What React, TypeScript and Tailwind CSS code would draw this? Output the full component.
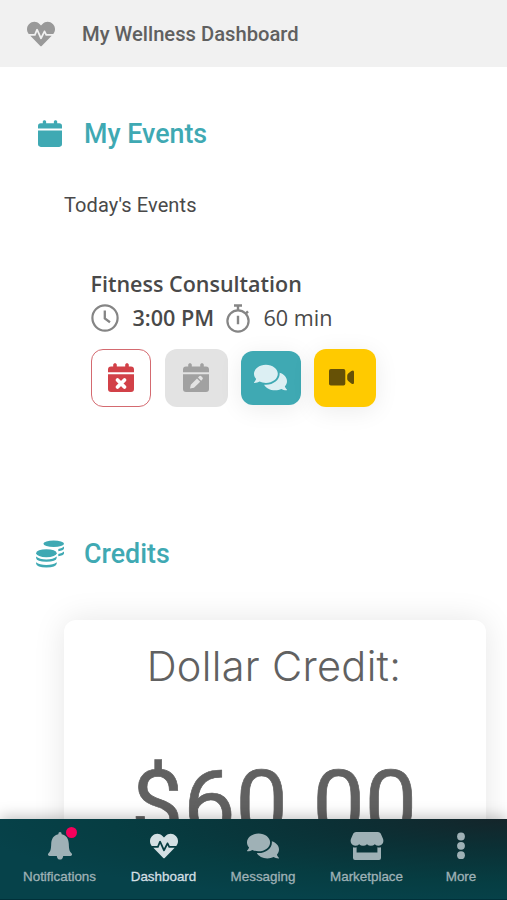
import React from 'react';
import { FaComments, FaHeartbeat } from 'react-icons/fa';

function CalendarIcon({ className, children }: { className?: string; children?: React.ReactNode }) {
  return (
    <svg viewBox="0 0 26 29" fill="currentColor" className={className}>
      <path d="M5.200 1.800C5.200-.4 8.800-.4 8.800 1.800V3.500h8.400V1.800C17.200-.4 20.800-.4 20.800 1.800V3.500H23Q26 3.500 26 6.500V9.200H0V6.500Q0 3.500 3 3.500h2.200z" />
      <path d="M0 11.200h26V26Q26 29 23 29H3Q0 29 0 26z" />
      {children}
    </svg>
  );
}

function CoinsIcon() {
  return (
    <svg viewBox="0 0 28 28" fill="currentColor" className="h-7 w-7">
      <ellipse cx="17.700" cy="3.700" rx="10.300" ry="3.200" />
      <path d="M22.300 9Q26.300 8.300 28 6.600V8.500Q27.500 10.500 22.300 11.300z" />
      <path d="M22.300 13.900Q26.300 13.200 28 11.500V13.400Q27.500 15.400 22.300 16.200z" />
      <ellipse cx="10.400" cy="13.200" rx="10.300" ry="4" />
      <path d="M.1 16.600Q3.500 19.600 10.400 19.600T20.700 16.600V18Q20.200 21.800 10.400 21.800T.1 18z" />
      <path d="M.1 22.300Q3.500 25 10.400 25T20.700 22.300V23.700Q20.200 27.400 10.400 27.400T.1 23.700z" />
    </svg>
  );
}

function ClockIcon() {
  return (
    <svg viewBox="0 0 28 28" fill="none" stroke="currentColor" className="h-7 w-7">
      <circle cx="14" cy="14" r="12.600" strokeWidth="2.200" />
      <path d="M13.800 6.500v8l5.200 3.700" strokeWidth="2.300" />
    </svg>
  );
}

function StopwatchIcon() {
  return (
    <svg viewBox="0 0 24 29" fill="none" stroke="currentColor" className="h-[29px] w-6">
      <circle cx="12" cy="17" r="10.600" strokeWidth="2.200" />
      <path d="M8 1.500h8M12 1.500v5M12 11.800v8.400M20 9.300l2-2" strokeWidth="2.400" />
    </svg>
  );
}

function VideoIcon() {
  return (
    <svg viewBox="0 0 25 17" fill="currentColor" className="h-[17px] w-[25px]">
      <rect width="16.300" height="16.500" rx="1.800" />
      <path d="M18.200 6.700Q18.200 5.400 19.200 4.500L22.300 2Q25 .4 25 3v10.500Q25 16 22.300 14.500L19.200 12Q18.200 11.200 18.200 10z" />
    </svg>
  );
}

function BellIcon() {
  return (
    <svg viewBox="0 0 24 28" fill="currentColor" className="h-7 w-6">
      <path d="M12 0q1.700 0 1.700 2.300C18.500 3.200 20.600 7 20.800 12c.2 5.300.7 7.400 2.700 9.200 1.100 1.200.4 2.800-1 2.800h-7.300C15 26.500 13.700 27.600 12 27.600S9 26.500 8.800 24H1.500C.1 24-.6 22.400.5 21.200c2-1.800 2.500-3.900 2.700-9.200.2-5 2.300-8.800 7.100-9.700Q10.300 0 12 0z" />
    </svg>
  );
}

function StoreIcon() {
  return (
    <svg viewBox="0 0 34 28" fill="currentColor" className="h-7 w-[34px]">
      <path d="M6 0h22q1.800 0 2.700 1.600l2.300 5.200C34.300 10.200 32 13.700 28.800 13.700q-2.500 0-4-1.500-1.600 1.500-3.900 1.500T17 12.200Q15.400 13.700 13.100 13.700T9.200 12.200Q7.700 13.700 5.200 13.700C2 13.700-.3 10.200 1 6.800l2.300-5.200Q4.200 0 6 0z" />
      <path d="M3 15.200q1.800.4 3.600 0V20.500h20.800v-5.300q1.800.4 3.600 0V26Q31 28 29 28H5Q3 28 3 26z" />
    </svg>
  );
}

function MoreIcon() {
  return (
    <svg viewBox="0 0 8 28" fill="currentColor" className="h-7 w-2">
      <circle cx="4" cy="4.500" r="3.900" />
      <circle cx="4" cy="13.800" r="3.900" />
      <circle cx="4" cy="23.200" r="3.900" />
    </svg>
  );
}

const navItems = [
  { label: 'Notifications', icon: <BellIcon />, width: 'w-[119px]', badge: true },
  { label: 'Dashboard', icon: <FaHeartbeat className="h-7 w-7" />, width: 'w-[89px]', active: true },
  { label: 'Messaging', icon: <FaComments className="h-8 w-8" />, width: 'w-[110px]' },
  { label: 'Marketplace', icon: <StoreIcon />, width: 'w-[97px]' },
  { label: 'More', icon: <MoreIcon />, width: 'w-[92px]' },
];

export default function App() {
  return (
    <div className="relative h-[900px] w-[507px] overflow-hidden bg-white font-['Roboto',sans-serif] text-[#494949]">
      <header className="flex h-[67px] items-center bg-[#f1f1f1] pl-[27px]">
        <FaHeartbeat className="h-7 w-7 text-[#999]" />
        <h1 className="mt-px ml-[27px] text-[20.200px] font-medium whitespace-nowrap text-[#606060]">My Wellness Dashboard</h1>
      </header>

      {/* Events */}
      <section className="h-[467px] pt-[46px]">
        <div className="flex h-10 items-center pl-[38px] text-[#3fa9b3]">
          <CalendarIcon className="h-[27px] w-6" />
          <h2 className="mt-0.5 ml-[22px] text-[26.800px] font-medium">My Events</h2>
        </div>
        <h3 className="mt-9 pl-16 text-[20px] leading-8 tracking-[0.100px]">Today's Events</h3>

        <div className="mt-[47px] pl-[90.500px] font-['Open_Sans',sans-serif]">
          <h4 className="text-[21.500px] leading-8 font-semibold">Fitness Consultation</h4>
          <div className="flex h-9 items-center text-[21.600px] leading-9">
            <span className="text-[#858585]"><ClockIcon /></span>
            <span className="ml-[14px] w-[82px] font-semibold whitespace-nowrap">3:00 PM</span>
            <span className="ml-[11px] text-[#858585]"><StopwatchIcon /></span>
            <span className="ml-[14px] whitespace-nowrap">60 min</span>
          </div>
          <div className="mt-[12.500px] flex items-center">
            <button className="flex h-[58px] w-[60px] items-center justify-center rounded-xl border border-[#d46a70] bg-white text-[#d24148]">
              <CalendarIcon className="h-[29px] w-[26px]">
                <path d="M9.500 17l7 7m0-7l-7 7" stroke="white" strokeWidth="3.800" strokeLinecap="round" />
              </CalendarIcon>
            </button>
            <button className="ml-[14px] flex h-[58px] w-[63px] items-center justify-center rounded-xl bg-[#e3e3e3] text-[#a1a1a1]">
              <CalendarIcon className="h-[29px] w-[26px]">
                <path d="M7 25.500l.8-3.800 6.200-6.200 3.200 3.200L11 24.800zM15 14.500l1.500-1.400q.9-.7 1.800.1l1.200 1.200q.8.9 0 1.800l-1.300 1.500z" fill="#e3e3e3" />
              </CalendarIcon>
            </button>
            <button className="ml-[13px] flex h-[54px] w-[60px] items-center justify-center rounded-xl bg-[#3fa9b3] text-[#dceff3] shadow-[0_4px_24px_#00000014]">
              <FaComments className="h-[33px] w-[33px]" />
            </button>
            <button className="ml-[13px] flex h-[58px] w-[62px] items-center justify-center rounded-xl bg-[#ffca00] pr-[6px] text-[#665106] shadow-[0_4px_24px_#00000014]">
              <VideoIcon />
            </button>
          </div>
        </div>
      </section>

      {/* Credits */}
      <section>
        <div className="flex h-10 items-center pl-9 text-[#3fa9b3]">
          <CoinsIcon />
          <h2 className="ml-5 text-[26.800px] font-medium">Credits</h2>
        </div>
        <div className="mt-[46px] ml-16 h-[320px] w-[422px] rounded-xl bg-white pt-[20px] text-center text-[#616161] shadow-[0_0_32px_#0000001a]">
          <p className="-ml-0.5 font-['Inter',sans-serif] text-[41.500px] leading-[52px] font-light tracking-[0.300px] whitespace-nowrap">Dollar Credit:</p>
          <p className="mt-[58px] -ml-0.5 text-[93px] leading-[110px] whitespace-nowrap [-webkit-text-stroke:0.7px_#616161]">$60.00</p>
        </div>
      </section>

      <nav className="absolute bottom-0 left-0 flex h-[81px] w-full border-b border-[#003039] bg-[radial-gradient(ellipse_at_100%_0%,#14252a_0%,#0b3035_25%,#063d42_55%,#06424a_75%)] font-['Liberation_Sans',sans-serif] shadow-[0_-2px_14px_#00000040]">
        {navItems.map((item) => (
          <a key={item.label} className={`relative flex shrink-0 flex-col items-center pt-[10px] ${item.width} ${item.active ? 'text-[#d3dfe3]' : 'text-[#9fb1b6]'}`}>
            <span className="flex h-[34px] items-center justify-center">{item.icon}</span>
            <span className="mt-1 text-[13.400px] leading-5 [-webkit-text-stroke:0.3px_currentColor]">{item.label}</span>
            {item.badge && <span className="absolute top-2 left-[66px] h-[11px] w-[11px] rounded-full bg-[#f5005b]" />}
          </a>
        ))}
      </nav>
    </div>
  );
}
